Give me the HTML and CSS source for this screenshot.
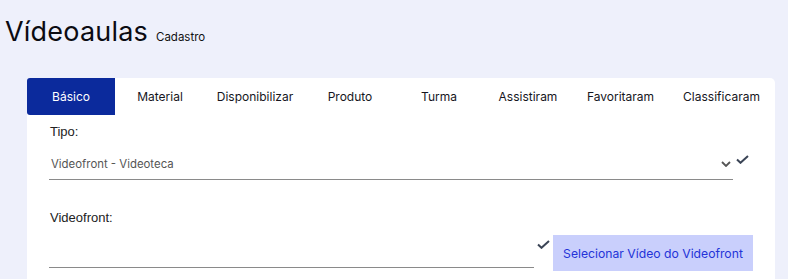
FILE: index.html
```html
<!DOCTYPE html>
<html lang="pt-BR">
<head>
  <meta charset="UTF-8">
  <meta name="viewport" content="width=device-width, initial-scale=1">
  <title>Vídeoaulas - Cadastro</title>
  <link rel="stylesheet" href="styles.css">
</head>
<body>
  <!-- Cabeçalho -->
  <header class="page-head">
    <h1>Vídeoaulas</h1>
    <small>Cadastro</small>
  </header>

  <!-- Formulário -->
  <section class="card">
    <nav class="tabs">
      <a class="tab active">Básico</a>
      <a class="tab">Material</a>
      <a class="tab">Disponibilizar</a>
      <a class="tab">Produto</a>
      <a class="tab">Turma</a>
      <a class="tab">Assistiram</a>
      <a class="tab">Favoritaram</a>
      <a class="tab">Classificaram</a>
    </nav>

    <div class="card-body">
      <div class="field">
        <label for="tipo">Tipo:</label>
        <div class="field-row">
          <div class="select" id="tipo">
            <span>Videofront - Videoteca</span>
            <svg class="chevron" width="10" height="6" viewBox="0 0 10 6"><path d="M1 1 L5 5 L9 1" fill="none" stroke="#555" stroke-width="1.8"/></svg>
          </div>
          <svg class="check check-select" width="13" height="9" viewBox="0 0 13 9"><path d="M1 4.5 L4.5 7.8 L12 1" fill="none" stroke="#3b4556" stroke-width="2"/></svg>
        </div>
      </div>

      <div class="field field-video">
        <label for="videofront">Videofront:</label>
        <div class="field-row">
          <input type="text" id="videofront" class="input">
          <svg class="check check-input" width="13" height="9" viewBox="0 0 13 9"><path d="M1 4.5 L4.5 7.8 L12 1" fill="none" stroke="#3b4556" stroke-width="2"/></svg>
          <button class="btn-select">Selecionar Vídeo do Videofront</button>
        </div>
      </div>
    </div>
  </section>
</body>
</html>
```

FILE: styles.css
```css
* {
  box-sizing: border-box;
  margin: 0;
  padding: 0;
}

body {
  font-family: 'Inter', 'Open Sans', sans-serif;
  background: #eef0fb;
  color: #111;
  overflow: hidden;
}

/* Cabeçalho */
.page-head {
  display: flex;
  align-items: baseline;
  gap: 8px;
  padding: 14px 0 0 5px;
  height: 78px;
}

.page-head h1 {
  font-size: 27px;
  font-weight: 400;
  letter-spacing: 0.2px;
  color: #0b0b12;
  line-height: 36px;
}

.page-head small {
  font-size: 11.5px;
  color: #111;
}

/* Card */
.card {
  margin-left: 27px;
  width: 748px;
  height: 201px;
  background: #fff;
  border-radius: 5px 5px 0 0;
}

.tabs {
  display: grid;
  grid-template-columns: 88px 90px 100px 90px 88px 90px 95px 107px;
  height: 37px;
}

.tab {
  display: flex;
  justify-content: center;
  align-items: center;
  font-size: 12px;
  color: #16161d;
  cursor: pointer;
}

.tab.active {
  background: #0b2a9c;
  color: #fff;
  border-radius: 3px 0 0 3px;
}

.card-body {
  padding: 9px 22px 0;
}

.field label {
  display: block;
  margin-left: 1px;
  font-family: 'Liberation Sans', Arial, sans-serif;
  font-size: 13px;
  line-height: 15px;
  color: #222;
}

.field-row {
  display: flex;
  align-items: flex-start;
  gap: 3px;
}

.field:first-child .field-row {
  margin-top: 5px;
}

.select {
  width: 684px;
  height: 36px;
  padding-top: 5px;
  display: flex;
  align-items: center;
  justify-content: space-between;
  border-bottom: 1px solid #8a8a8a;
  font-size: 11.4px;
  color: #555;
}

.select span {
  margin-left: 2px;
}

.chevron {
  margin-right: 2px;
}

.check-select {
  margin-top: 11px;
}

.field-video {
  margin-top: 30px;
}

.field-video .field-row {
  margin-top: 10px;
}

.input {
  width: 485px;
  height: 33px;
  border: none;
  border-bottom: 1px solid #8a8a8a;
  outline: none;
  background: transparent;
}

.check-input {
  margin-top: 5px;
}

.btn-select {
  width: 200px;
  height: 36px;
  border: none;
  background: #c9cffc;
  color: #2434d8;
  font-family: 'Inter', 'Open Sans', sans-serif;
  font-size: 12.2px;
  cursor: pointer;
}
```
